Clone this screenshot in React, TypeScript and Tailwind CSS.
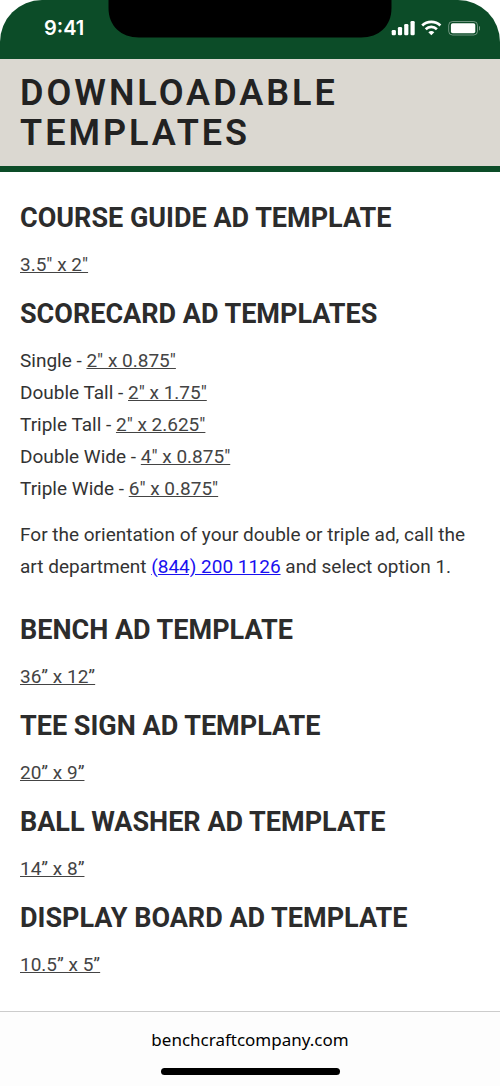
import React from "react";

type Line = { label?: string; size: string };

const courseGuide: Line[] = [{ size: '3.5" x 2"' }];

const scorecard: Line[] = [
  { label: "Single", size: '2" x 0.875"' },
  { label: "Double Tall", size: '2" x 1.75"' },
  { label: "Triple Tall", size: '2" x 2.625"' },
  { label: "Double Wide", size: '4" x 0.875"' },
  { label: "Triple Wide", size: '6" x 0.875"' },
];

const otherSections: { title: string; lines: Line[] }[] = [
  { title: "BENCH AD TEMPLATE", lines: [{ size: "36” x 12”" }] },
  { title: "TEE SIGN AD TEMPLATE", lines: [{ size: "20” x 9”" }] },
  { title: "BALL WASHER AD TEMPLATE", lines: [{ size: "14” x 8”" }] },
  { title: "DISPLAY BOARD AD TEMPLATE", lines: [{ size: "10.5” x 5”" }] },
];

function Section({
  title,
  lines,
  children,
}: {
  title: string;
  lines: Line[];
  children?: React.ReactNode;
}) {
  return (
    <section>
      <h2 className="mb-[15px] text-[27px] leading-8 font-bold text-[#2c2c2c]">
        {title}
      </h2>
      <ul>
        {lines.map((line) => (
          <li key={line.size}>
            {line.label ? `${line.label} - ` : null}
            <a href="#" className="text-[#444] underline">
              {line.size}
            </a>
          </li>
        ))}
      </ul>
      {children}
    </section>
  );
}

function StatusIcons() {
  return (
    <svg
      className="h-4 w-[90px]"
      viewBox="0 0 90 16"
      fill="#fff"
      role="img"
      aria-label="Signal, Wi-Fi and battery"
    >
      <rect x="1.700" y="10" width="4.200" height="5.200" rx="1.300" />
      <rect x="7.900" y="7" width="4.200" height="8.200" rx="1.300" />
      <rect x="14.200" y="4" width="4.200" height="11.200" rx="1.300" />
      <rect x="20.500" y="1" width="4.200" height="14.200" rx="1.300" />
      <g fill="none" stroke="#fff" strokeWidth="2.700">
        <path d="M32.200 5.500a13 13 0 0 1 18.200 0" />
        <path d="M35.700 9.200a8.100 8.100 0 0 1 11.200 0" />
      </g>
      <path d="M41.300 15.300 38.300 12.300a4.400 4.400 0 0 1 6 0Z" />
      <rect
        x="58.700"
        y="1.500"
        width="28.800"
        height="13.500"
        rx="3.800"
        fill="none"
        stroke="#fff"
        strokeOpacity=".4"
      />
      <rect x="60.900" y="3.300" width="24.400" height="10" rx="1.800" />
      <path d="M89 6v4.600c1-.4 1.500-1.300 1.500-2.300S90 6.400 89 6Z" fillOpacity=".45" />
    </svg>
  );
}

function StatusBar() {
  return (
    <div className="relative flex h-[59px] items-start justify-between rounded-t-[42px] bg-[#0c4c28] pt-4 pr-5 pl-11 text-white">
      <span className="font-[Inter,sans-serif] text-xl leading-6 font-semibold">
        9:41
      </span>
      <svg
        className="absolute top-0 left-1/2 h-[38px] w-[292px] -translate-x-1/2"
        viewBox="0 0 292 38"
        aria-hidden="true"
      >
        <path
          d="M4.500 0H287.500V8C287.500 26 275 37.500 257 37.500H35C17 37.500 4.500 26 4.500 8Z"
          fill="#000"
        />
      </svg>
      <div className="pt-1">
        <StatusIcons />
      </div>
    </div>
  );
}

export default function App() {
  return (
    <div className="flex min-h-screen flex-col bg-white font-[Roboto,sans-serif] text-[19px] leading-8 text-[#333]">
      <StatusBar />
      <header className="border-b-6 border-[#0c4c28] bg-[#dbd8d1] px-5 pt-[14px] pb-[13px]">
        <h1 className="text-[36px] leading-10 font-semibold tracking-[3px] text-[#222]">
          DOWNLOADABLE TEMPLATES
        </h1>
      </header>
      <main className="flex grow flex-col gap-[17px] px-5 pt-[30px] pb-7">
        <Section title="COURSE GUIDE AD TEMPLATE" lines={courseGuide} />
        <Section title="SCORECARD AD TEMPLATES" lines={scorecard}>
          <p className="mt-[14px] mb-[14px]">
            For the orientation of your double or triple ad, call the art
            department{" "}
            <a href="tel:+18442001126" className="text-[#1a10f0] underline">
              (844) 200 1126
            </a>{" "}
            and select option 1.
          </p>
        </Section>
        {otherSections.map((section) => (
          <Section key={section.title} {...section} />
        ))}
      </main>
      <footer className="flex h-[75px] flex-col items-center justify-between border-t border-[#ccc] bg-[#fdfdfd] pt-3 pb-[11px]">
        <a
          href="https://benchcraftcompany.com"
          className="font-['Noto_Sans',sans-serif] text-[17px] leading-8 text-black"
        >
          benchcraftcompany.com
        </a>
        <div className="h-[7px] w-[179px] rounded-full bg-black" />
      </footer>
    </div>
  );
}
